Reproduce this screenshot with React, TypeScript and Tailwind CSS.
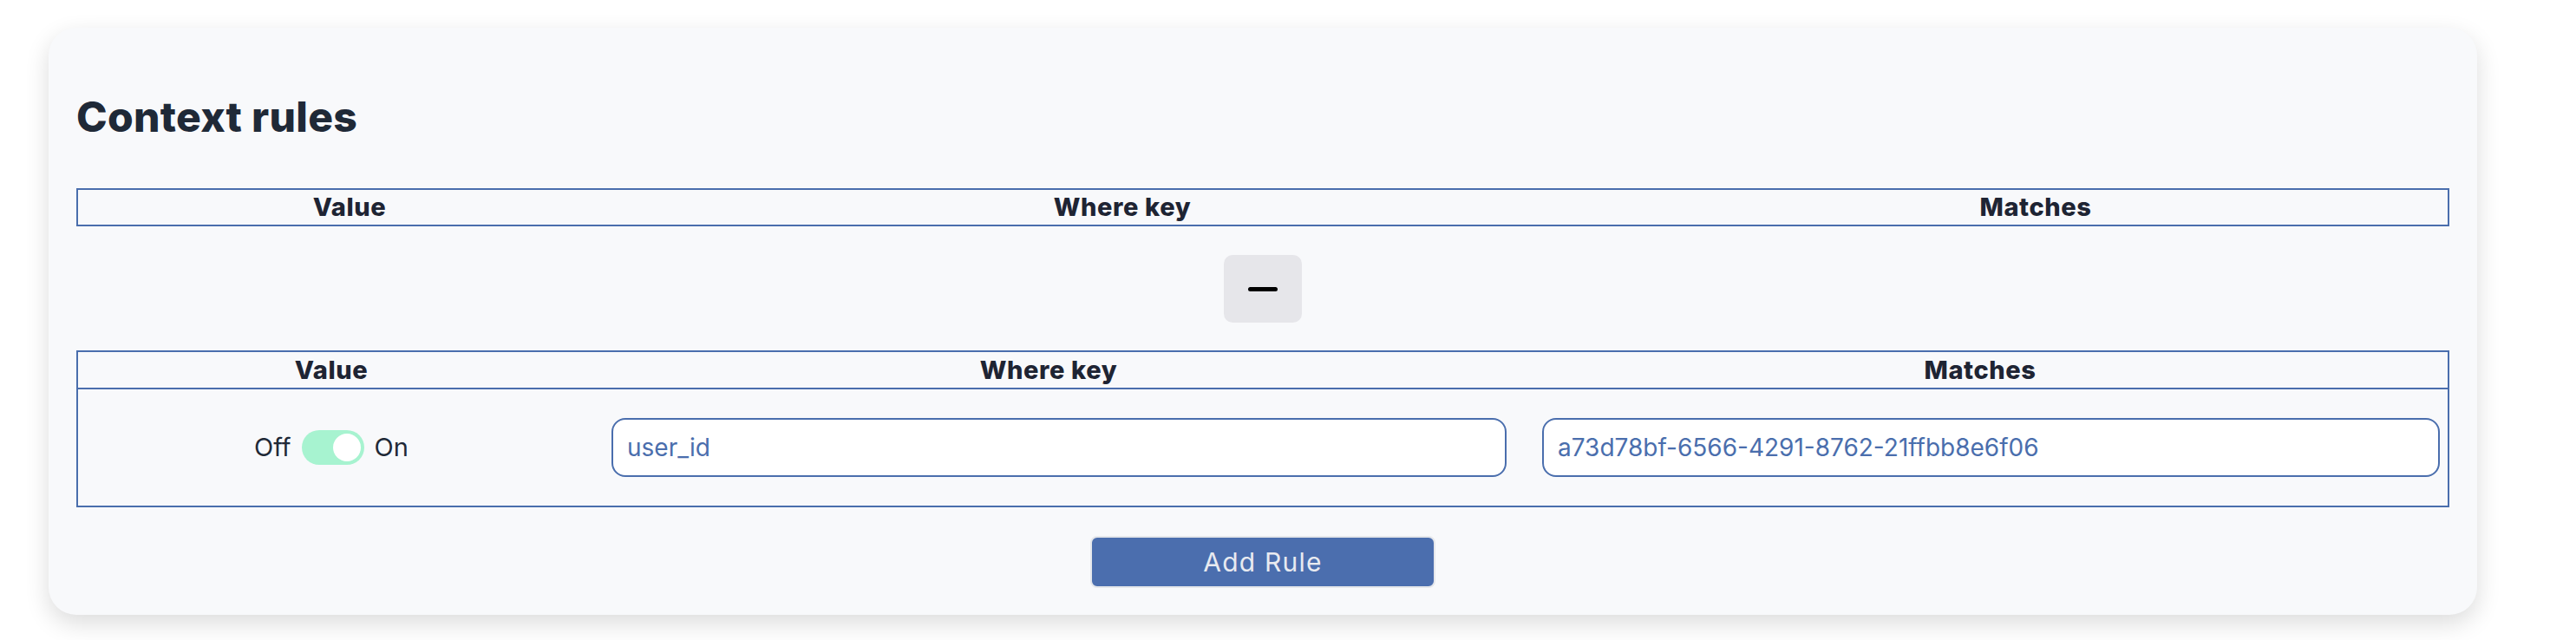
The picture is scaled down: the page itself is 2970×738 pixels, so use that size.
const FONT = { fontFamily: 'Inter, "Noto Sans", sans-serif' }

const HEAD_TOP = ['Value', 'Where key', 'Matches']

export default function App() {
  return (
    <div className="h-[738px] w-[2970px] bg-white pt-[32px] pl-[56px]" style={FONT}>
      <section className="flex h-[677px] w-[2800px] flex-col rounded-[32px] bg-[#f8f9fb] px-[32px] pt-[79px] shadow-[0_10px_28px_rgba(0,0,0,0.14)]">
        <h2 className="text-[48px] leading-[48px] font-extrabold tracking-[0.3px] text-[#1f2937]">Context rules</h2>

        {/* empty rule header */}
        <div className="mt-[58px] grid grid-cols-[626px_1156px_1fr] border-2 border-[#4a6ead]">
          {HEAD_TOP.map((h) => (
            <div key={h} className="text-center text-[29px] leading-[40px] font-extrabold tracking-[0.6px] text-[#1e2433]">
              {h}
            </div>
          ))}
        </div>

        <div className="mt-[33px] flex justify-center">
          <button className="grid h-[78px] w-[90px] place-items-center rounded-[10px] bg-[#e6e6ea]">
            <span className="block h-[5px] w-[34px] rounded-full bg-black" />
          </button>
        </div>

        {/* rule table */}
        <div className="mt-[32px] border-2 border-[#4a6ead]">
          <div className="grid grid-cols-[584px_1070px_1fr] border-b-2 border-[#4a6ead]">
            {HEAD_TOP.map((h) => (
              <div key={h} className="text-center text-[29px] leading-[41px] font-extrabold tracking-[0.6px] text-[#1e2433]">
                {h}
              </div>
            ))}
          </div>
          <div className="grid h-[134px] grid-cols-[584px_1070px_1fr] items-center">
            <div className="flex items-center justify-center gap-[12px] text-[29px] text-[#1f2937]">
              <span>Off</span>
              <span className="flex h-[40px] w-[72px] items-center justify-end rounded-full bg-[#a7f3d0] px-[4px]">
                <span className="h-[32px] w-[32px] rounded-full bg-white" />
              </span>
              <span>On</span>
            </div>
            <div className="pr-[7px] pl-[31px]">
              <Field value="user_id" />
            </div>
            <div className="pr-[9px] pl-[34px]">
              <Field value="a73d78bf-6566-4291-8762-21ffbb8e6f06" />
            </div>
          </div>
        </div>

        <div className="mt-[33px] flex justify-center">
          <button className="h-[60px] w-[398px] rounded-[8px] border-2 border-[#e5e7eb] bg-[#4b6eae] text-[30px] tracking-[1.2px] text-[#e8eaf0]">
            Add Rule
          </button>
        </div>
      </section>
    </div>
  )
}

function Field({ value }: { value: string }) {
  return (
    <div className="flex h-[68px] items-center rounded-[16px] border-2 border-[#4a6ead] bg-white pl-[16px] text-[28px] text-[#4a6ead]">
      {value}
    </div>
  )
}
